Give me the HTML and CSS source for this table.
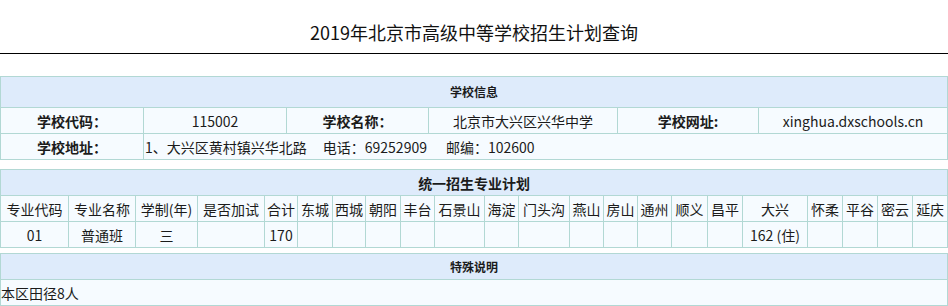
FILE: index.html
```html
<!DOCTYPE html>
<html lang="zh-CN">
<head>
<meta charset="utf-8">
<title>2019年北京市高级中等学校招生计划查询</title>
<link rel="stylesheet" href="styles.css">
</head>
<body>
<h1 class="page-title">2019年北京市高级中等学校招生计划查询</h1>

<table class="grid school">
  <colgroup>
    <col class="c-label"><col class="c-value"><col class="c-label2"><col class="c-name"><col class="c-label3"><col class="c-url">
  </colgroup>
  <tr class="head-row tall"><th colspan="6" class="small">学校信息</th></tr>
  <tr>
    <th>学校代码<span class="colon">：</span></th><td>115002</td>
    <th>学校名称<span class="colon">：</span></th><td>北京市大兴区兴华中学</td>
    <th>学校网址:</th><td>xinghua.dxschools.cn</td>
  </tr>
  <tr>
    <th>学校地址<span class="colon">：</span></th>
    <td colspan="5" class="left">1、大兴区黄村镇兴华北路<span class="gap">电话<span class="colon">：</span>69252909</span><span class="gap wide">邮编<span class="colon">：</span>102600</span></td>
  </tr>
</table>

<table class="grid plan">
  <colgroup>
    <col><col><col><col><col><col><col><col><col><col><col>
    <col><col><col><col><col><col><col><col><col><col><col>
  </colgroup>
  <tr class="head-row"><th colspan="22">统一招生专业计划</th></tr>
  <tr>
    <td>专业代码</td><td>专业名称</td><td>学制(年)</td><td>是否加试</td><td>合计</td>
    <td>东城</td><td>西城</td><td>朝阳</td><td>丰台</td><td>石景山</td><td>海淀</td>
    <td>门头沟</td><td>燕山</td><td>房山</td><td>通州</td><td>顺义</td><td>昌平</td>
    <td>大兴</td><td>怀柔</td><td>平谷</td><td>密云</td><td>延庆</td>
  </tr>
  <tr>
    <td>01</td><td>普通班</td><td>三</td><td></td><td>170</td>
    <td></td><td></td><td></td><td></td><td></td><td></td>
    <td></td><td></td><td></td><td></td><td></td><td></td>
    <td>162 (住)</td><td></td><td></td><td></td><td></td>
  </tr>
</table>

<table class="grid notes">
  <tr class="head-row"><th class="small">特殊说明</th></tr>
  <tr><td class="left flush">本区田径8人</td></tr>
</table>
</body>
</html>
```

FILE: styles.css
```css
html, body {
  margin: 0;
  padding: 0;
  background: #fff;
}

body {
  font-family: "Noto Sans CJK SC", "Noto Sans", sans-serif;
  font-size: 14px;
  color: #1b1b1b;
  width: 948px;
}

.page-title {
  box-sizing: border-box;
  height: 54px;
  margin: 0 0 22px;
  padding-top: 10px;
  display: flex;
  align-items: center;
  justify-content: center;
  font-size: 18px;
  font-weight: normal;
  color: #111;
  border-bottom: 1px solid #000;
}

.grid {
  width: 948px;
  border-collapse: collapse;
  table-layout: fixed;
  margin: 0;
}

.grid th,
.grid td {
  border: 1px solid #b2d8d4;
  background: #f6fbff;
  padding: 0;
  height: 25px;
  text-align: center;
  font-weight: normal;
  white-space: nowrap;
  line-height: 18px;
}

.grid th {
  font-weight: bold;
}

.grid .head-row th {
  background: #deebfb;
  font-weight: bold;
}

.grid .head-row.tall th {
  height: 30px;
}

.grid .small {
  font-size: 12px;
}

.grid .left {
  text-align: left;
  padding-left: 1px;
}

.grid .flush {
  padding-left: 0;
}

/* full-width colon drawn centred in its box */
.colon {
  font-family: "Noto Sans CJK TC", "Noto Sans CJK SC", sans-serif;
}

/* spacing between the address, phone and postcode */
.gap {
  padding-left: 16px;
}

.gap.wide {
  padding-left: 19px;
}

/* school info columns */
.school { margin-bottom: 9px; }
.school .c-label  { width: 143px; }
.school .c-value  { width: 143px; }
.school .c-label2 { width: 142px; }
.school .c-name   { width: 189px; }
.school .c-label3 { width: 141px; }
.school .c-url    { width: 189px; }

/* plan table column widths */
.plan { margin-bottom: 5px; }
.plan col:nth-child(1)  { width: 68px; }
.plan col:nth-child(2)  { width: 67px; }
.plan col:nth-child(3)  { width: 62px; }
.plan col:nth-child(4)  { width: 67px; }
.plan col:nth-child(5)  { width: 33px; }
.plan col:nth-child(6)  { width: 35px; }
.plan col:nth-child(7)  { width: 33px; }
.plan col:nth-child(8)  { width: 35px; }
.plan col:nth-child(9)  { width: 34px; }
.plan col:nth-child(10) { width: 50px; }
.plan col:nth-child(11) { width: 34px; }
.plan col:nth-child(12) { width: 51px; }
.plan col:nth-child(13) { width: 34px; }
.plan col:nth-child(14) { width: 34px; }
.plan col:nth-child(15) { width: 34px; }
.plan col:nth-child(16) { width: 36px; }
.plan col:nth-child(17) { width: 35px; }
.plan col:nth-child(18) { width: 65px; }
.plan col:nth-child(19) { width: 35px; }
.plan col:nth-child(20) { width: 35px; }
.plan col:nth-child(21) { width: 35px; }
.plan col:nth-child(22) { width: 35px; }
```
